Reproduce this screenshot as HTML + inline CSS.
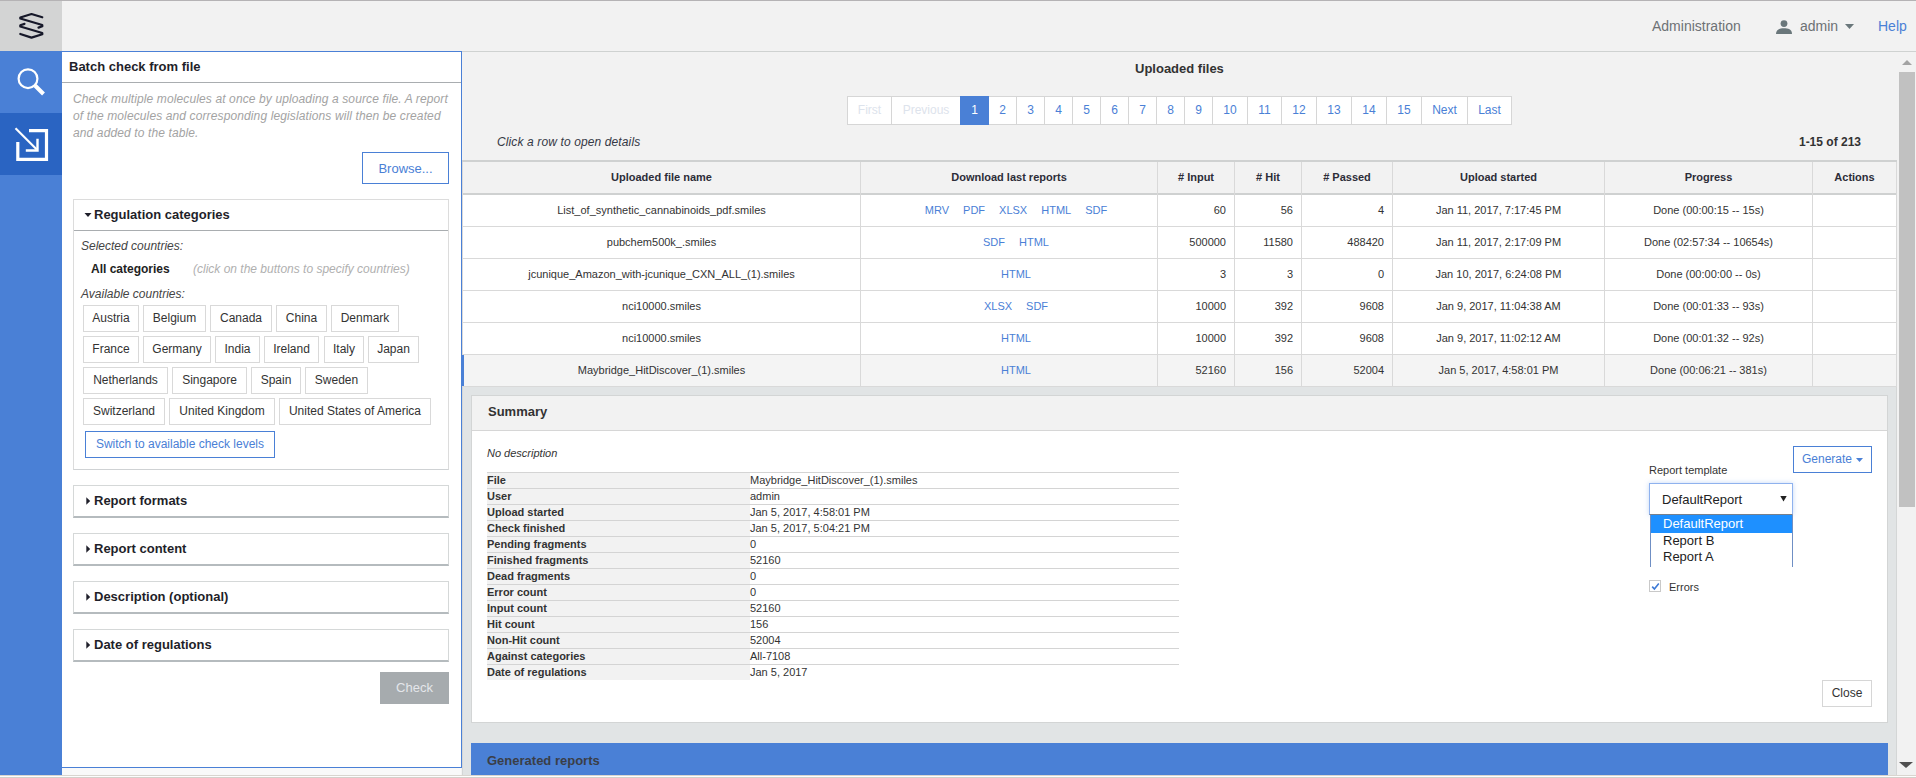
<!DOCTYPE html>
<html><head><meta charset="utf-8">
<style>
*{box-sizing:border-box;}
html,body{margin:0;padding:0;}
body{width:1916px;height:778px;overflow:hidden;position:relative;background:#f2f2f2;font-family:"Liberation Sans",sans-serif;font-size:12px;color:#333;}
.a{position:absolute;}
.t{position:absolute;white-space:nowrap;}
</style></head><body>
<!-- top chrome line -->
<div class="a" style="left:0;top:0;width:1916px;height:1px;background:#b5b3b5"></div>
<!-- logo -->
<div class="a" style="left:0;top:1px;width:62px;height:50px;background:#d3d4d4">
<svg width="62" height="50" style="position:absolute;left:0;top:-1px" viewBox="0 0 62 50"><path d="M42.3 17.3 L31.5 14 L20.3 17.5 L20.3 18.5 L42.3 25 L42.3 26.2 L38.5 27.6 M24.5 23.9 L20.3 25.2 L20.3 26.5 L42.3 33 L42.3 34.3 L31.5 37.6 L20.3 34" fill="none" stroke="#161829" stroke-width="2.2" stroke-linejoin="round" stroke-linecap="round"/></svg>
</div>
<!-- topbar -->
<div class="a" style="left:62px;top:1px;width:1854px;height:51px;background:#f2f2f2;border-bottom:1px solid #cfd2d1"></div>
<div class="t" style="left:1652px;top:17px;font-size:14px;line-height:18px;color:#6d7175">Administration</div>
<svg class="a" style="left:1775px;top:20px" width="18" height="14" viewBox="0 0 18 14"><circle cx="9" cy="3.6" r="3.4" fill="#6a777b"/><path d="M1 14 C1 9 5 8.2 9 8.2 C13 8.2 17 9 17 14 Z" fill="#6a777b"/></svg>
<div class="t" style="left:1800px;top:17px;font-size:14px;line-height:18px;color:#6d7175">admin</div>
<svg class="a" style="left:1845px;top:24px" width="9" height="5" viewBox="0 0 9 5"><path d="M0 0 L9 0 L4.5 5 Z" fill="#6a777b"/></svg>
<div class="t" style="left:1878px;top:17px;font-size:14px;line-height:18px;color:#4a80d6">Help</div>

<!-- sidebar -->
<div class="a" style="left:0;top:51px;width:62px;height:724px;background:#4a80d6"></div>
<div class="a" style="left:0;top:113px;width:62px;height:62px;background:#2a64c2"></div>
<svg class="a" style="left:0;top:51px" width="62" height="62" viewBox="0 0 62 62"><circle cx="28" cy="27.7" r="9.4" fill="none" stroke="#fff" stroke-width="2.2"/><path d="M35 34.5 L43.5 43" stroke="#fff" stroke-width="4" stroke-linecap="butt"/></svg>
<svg class="a" style="left:0;top:113px" width="62" height="62" viewBox="0 0 62 62"><path d="M17.8 29 V46.3 H46.5 V17.6 H29" fill="none" stroke="#fff" stroke-width="3.2"/><path d="M15.5 15.3 L36.5 36.3" stroke="#fff" stroke-width="2.2"/><path d="M37.5 25.7 V37.5 H25.8" fill="none" stroke="#fff" stroke-width="2.4"/></svg>

<!-- left panel -->
<div class="a" style="left:62px;top:51px;width:400px;height:717px;background:#fff;border-top:1px solid #4a80d6;border-right:1px solid #4a80d6;border-bottom:1px solid #4a80d6"></div>
<div class="a" style="left:62px;top:768px;width:399px;height:7px;background:#f9f9f9"></div>
<div class="a" style="left:0;top:775px;width:1916px;height:1px;background:#d9d5cf"></div>
<div class="a" style="left:0;top:776px;width:1916px;height:1px;background:#fdfdfd"></div>
<div class="a" style="left:0;top:777px;width:1916px;height:1px;background:#d4d0cb"></div>

<div class="t" style="left:69px;top:59px;font-size:13px;line-height:16px;font-weight:bold;color:#1f1f2a">Batch check from file</div>
<div class="a" style="left:62px;top:82px;width:399px;height:1px;background:#a9adb0"></div>
<div class="t" style="left:73px;top:91px;font-size:12px;line-height:17px;font-style:italic;color:#a3a3a3;letter-spacing:0.12px">Check multiple molecules at once by uploading a source file. A report<br>of the molecules and corresponding legislations will then be created<br>and added to the table.</div>
<div class="a" style="left:362px;top:152px;width:87px;height:32px;border:1px solid #4a80d6;background:#fff;color:#4a80d6;font-size:13px;line-height:31px;text-align:center">Browse...</div>

<!-- regulation categories -->
<div class="a" style="left:73px;top:199px;width:376px;height:271px;border:1px solid #dcdcdc;border-bottom-color:#cfd2d4"></div>
<div class="a" style="left:74px;top:230px;width:374px;height:1px;background:#a9adb0"></div>
<svg class="a" style="left:84px;top:213px" width="8" height="5" viewBox="0 0 8 5"><path d="M0.5 0 H7.5 L4 4 Z" fill="#1f1f2a"/></svg>
<div class="t" style="left:94px;top:207px;font-size:13px;line-height:16px;font-weight:bold;color:#1f1f2a">Regulation categories</div>
<div class="t" style="left:81px;top:239px;font-size:12px;line-height:15px;font-style:italic;color:#444">Selected countries:</div>
<div class="t" style="left:91px;top:262px;font-size:12px;line-height:15px;font-weight:bold;color:#222">All categories</div>
<div class="t" style="left:193px;top:262px;font-size:12px;line-height:15px;font-style:italic;color:#b0b0b0">(click on the buttons to specify countries)</div>
<div class="t" style="left:81px;top:287px;font-size:12px;line-height:15px;font-style:italic;color:#444">Available countries:</div>
<div class="a" style="left:83px;top:305px;width:56px;height:27px;border:1px solid #d9d9d9;background:#fff;font-size:12px;line-height:24px;text-align:center;color:#333">Austria</div>
<div class="a" style="left:143px;top:305px;width:63px;height:27px;border:1px solid #d9d9d9;background:#fff;font-size:12px;line-height:24px;text-align:center;color:#333">Belgium</div>
<div class="a" style="left:210px;top:305px;width:62px;height:27px;border:1px solid #d9d9d9;background:#fff;font-size:12px;line-height:24px;text-align:center;color:#333">Canada</div>
<div class="a" style="left:276px;top:305px;width:51px;height:27px;border:1px solid #d9d9d9;background:#fff;font-size:12px;line-height:24px;text-align:center;color:#333">China</div>
<div class="a" style="left:331px;top:305px;width:68px;height:27px;border:1px solid #d9d9d9;background:#fff;font-size:12px;line-height:24px;text-align:center;color:#333">Denmark</div>
<div class="a" style="left:83px;top:336px;width:56px;height:27px;border:1px solid #d9d9d9;background:#fff;font-size:12px;line-height:24px;text-align:center;color:#333">France</div>
<div class="a" style="left:143px;top:336px;width:68px;height:27px;border:1px solid #d9d9d9;background:#fff;font-size:12px;line-height:24px;text-align:center;color:#333">Germany</div>
<div class="a" style="left:215px;top:336px;width:45px;height:27px;border:1px solid #d9d9d9;background:#fff;font-size:12px;line-height:24px;text-align:center;color:#333">India</div>
<div class="a" style="left:264px;top:336px;width:55px;height:27px;border:1px solid #d9d9d9;background:#fff;font-size:12px;line-height:24px;text-align:center;color:#333">Ireland</div>
<div class="a" style="left:324px;top:336px;width:40px;height:27px;border:1px solid #d9d9d9;background:#fff;font-size:12px;line-height:24px;text-align:center;color:#333">Italy</div>
<div class="a" style="left:368px;top:336px;width:51px;height:27px;border:1px solid #d9d9d9;background:#fff;font-size:12px;line-height:24px;text-align:center;color:#333">Japan</div>
<div class="a" style="left:83px;top:367px;width:85px;height:27px;border:1px solid #d9d9d9;background:#fff;font-size:12px;line-height:24px;text-align:center;color:#333">Netherlands</div>
<div class="a" style="left:172px;top:367px;width:75px;height:27px;border:1px solid #d9d9d9;background:#fff;font-size:12px;line-height:24px;text-align:center;color:#333">Singapore</div>
<div class="a" style="left:251px;top:367px;width:50px;height:27px;border:1px solid #d9d9d9;background:#fff;font-size:12px;line-height:24px;text-align:center;color:#333">Spain</div>
<div class="a" style="left:305px;top:367px;width:63px;height:27px;border:1px solid #d9d9d9;background:#fff;font-size:12px;line-height:24px;text-align:center;color:#333">Sweden</div>
<div class="a" style="left:83px;top:398px;width:82px;height:27px;border:1px solid #d9d9d9;background:#fff;font-size:12px;line-height:24px;text-align:center;color:#333">Switzerland</div>
<div class="a" style="left:169px;top:398px;width:106px;height:27px;border:1px solid #d9d9d9;background:#fff;font-size:12px;line-height:24px;text-align:center;color:#333">United Kingdom</div>
<div class="a" style="left:279px;top:398px;width:152px;height:27px;border:1px solid #d9d9d9;background:#fff;font-size:12px;line-height:24px;text-align:center;color:#333">United States of America</div>
<div class="a" style="left:85px;top:431px;width:190px;height:27px;border:1px solid #4a80d6;background:#fff;font-size:12px;line-height:25px;text-align:center;color:#4a80d6">Switch to available check levels</div>
<div class="a" style="left:73px;top:485px;width:376px;height:33px;border:1px solid #d5d8d8;border-bottom:2px solid #b5bbbe;background:#fff"></div>
<svg class="a" style="left:86px;top:497px" width="5" height="8" viewBox="0 0 5 8"><path d="M0.3 0.3 V7.7 L4.2 4 Z" fill="#1f1f2a"/></svg>
<div class="t" style="left:94px;top:493px;font-size:13px;line-height:16px;font-weight:bold;color:#1f1f2a">Report formats</div>
<div class="a" style="left:73px;top:533px;width:376px;height:33px;border:1px solid #d5d8d8;border-bottom:2px solid #b5bbbe;background:#fff"></div>
<svg class="a" style="left:86px;top:545px" width="5" height="8" viewBox="0 0 5 8"><path d="M0.3 0.3 V7.7 L4.2 4 Z" fill="#1f1f2a"/></svg>
<div class="t" style="left:94px;top:541px;font-size:13px;line-height:16px;font-weight:bold;color:#1f1f2a">Report content</div>
<div class="a" style="left:73px;top:581px;width:376px;height:33px;border:1px solid #d5d8d8;border-bottom:2px solid #b5bbbe;background:#fff"></div>
<svg class="a" style="left:86px;top:593px" width="5" height="8" viewBox="0 0 5 8"><path d="M0.3 0.3 V7.7 L4.2 4 Z" fill="#1f1f2a"/></svg>
<div class="t" style="left:94px;top:589px;font-size:13px;line-height:16px;font-weight:bold;color:#1f1f2a">Description (optional)</div>
<div class="a" style="left:73px;top:629px;width:376px;height:33px;border:1px solid #d5d8d8;border-bottom:2px solid #b5bbbe;background:#fff"></div>
<svg class="a" style="left:86px;top:641px" width="5" height="8" viewBox="0 0 5 8"><path d="M0.3 0.3 V7.7 L4.2 4 Z" fill="#1f1f2a"/></svg>
<div class="t" style="left:94px;top:637px;font-size:13px;line-height:16px;font-weight:bold;color:#1f1f2a">Date of regulations</div>
<div class="a" style="left:380px;top:672px;width:69px;height:32px;background:#a6abae;color:#e4e6ea;font-size:13px;line-height:32px;text-align:center">Check</div>


<!-- main -->
<div class="t" style="left:1135px;top:61px;font-size:13px;line-height:16px;font-weight:bold;color:#333">Uploaded files</div>
<div class="a" style="left:847px;top:96px;width:45px;height:29px;background:#fff;border:1px solid #d6d6d6;color:#dde3ec;font-size:12px;line-height:27px;text-align:center">First</div>
<div class="a" style="left:891px;top:96px;width:70px;height:29px;background:#fff;border:1px solid #d6d6d6;color:#dde3ec;font-size:12px;line-height:27px;text-align:center">Previous</div>
<div class="a" style="left:960px;top:96px;width:29px;height:29px;z-index:2;background:#4a80d6;color:#fff;font-size:12px;line-height:29px;text-align:center">1</div>
<div class="a" style="left:988px;top:96px;width:29px;height:29px;background:#fff;border:1px solid #d6d6d6;color:#4a80d6;font-size:12px;line-height:27px;text-align:center">2</div>
<div class="a" style="left:1016px;top:96px;width:29px;height:29px;background:#fff;border:1px solid #d6d6d6;color:#4a80d6;font-size:12px;line-height:27px;text-align:center">3</div>
<div class="a" style="left:1044px;top:96px;width:29px;height:29px;background:#fff;border:1px solid #d6d6d6;color:#4a80d6;font-size:12px;line-height:27px;text-align:center">4</div>
<div class="a" style="left:1072px;top:96px;width:29px;height:29px;background:#fff;border:1px solid #d6d6d6;color:#4a80d6;font-size:12px;line-height:27px;text-align:center">5</div>
<div class="a" style="left:1100px;top:96px;width:29px;height:29px;background:#fff;border:1px solid #d6d6d6;color:#4a80d6;font-size:12px;line-height:27px;text-align:center">6</div>
<div class="a" style="left:1128px;top:96px;width:29px;height:29px;background:#fff;border:1px solid #d6d6d6;color:#4a80d6;font-size:12px;line-height:27px;text-align:center">7</div>
<div class="a" style="left:1156px;top:96px;width:29px;height:29px;background:#fff;border:1px solid #d6d6d6;color:#4a80d6;font-size:12px;line-height:27px;text-align:center">8</div>
<div class="a" style="left:1184px;top:96px;width:29px;height:29px;background:#fff;border:1px solid #d6d6d6;color:#4a80d6;font-size:12px;line-height:27px;text-align:center">9</div>
<div class="a" style="left:1212px;top:96px;width:36px;height:29px;background:#fff;border:1px solid #d6d6d6;color:#4a80d6;font-size:12px;line-height:27px;text-align:center">10</div>
<div class="a" style="left:1247px;top:96px;width:35px;height:29px;background:#fff;border:1px solid #d6d6d6;color:#4a80d6;font-size:12px;line-height:27px;text-align:center">11</div>
<div class="a" style="left:1281px;top:96px;width:36px;height:29px;background:#fff;border:1px solid #d6d6d6;color:#4a80d6;font-size:12px;line-height:27px;text-align:center">12</div>
<div class="a" style="left:1316px;top:96px;width:36px;height:29px;background:#fff;border:1px solid #d6d6d6;color:#4a80d6;font-size:12px;line-height:27px;text-align:center">13</div>
<div class="a" style="left:1351px;top:96px;width:36px;height:29px;background:#fff;border:1px solid #d6d6d6;color:#4a80d6;font-size:12px;line-height:27px;text-align:center">14</div>
<div class="a" style="left:1386px;top:96px;width:36px;height:29px;background:#fff;border:1px solid #d6d6d6;color:#4a80d6;font-size:12px;line-height:27px;text-align:center">15</div>
<div class="a" style="left:1421px;top:96px;width:47px;height:29px;background:#fff;border:1px solid #d6d6d6;color:#4a80d6;font-size:12px;line-height:27px;text-align:center">Next</div>
<div class="a" style="left:1467px;top:96px;width:45px;height:29px;background:#fff;border:1px solid #d6d6d6;color:#4a80d6;font-size:12px;line-height:27px;text-align:center">Last</div>
<div class="t" style="left:497px;top:135px;font-size:12px;line-height:15px;font-style:italic;color:#353845;letter-spacing:0.12px">Click a row to open details</div>
<div class="t" style="left:1761px;top:135px;width:100px;text-align:right;font-size:12px;line-height:15px;font-weight:bold;color:#333">1-15 of 213</div>
<div class="a" style="left:462px;top:160px;width:1435px;height:2px;background:#cfd1d1"></div>
<div class="a" style="left:462px;top:193px;width:1435px;height:2px;background:#cfd1d1"></div>
<div class="a" style="left:462px;top:195px;width:1435px;height:192px;background:#fff"></div>
<div class="a" style="left:462px;top:355px;width:1435px;height:31px;background:#f4f4f4"></div>
<div class="a" style="left:462px;top:226px;width:1435px;height:1px;background:#d9d9d9"></div>
<div class="a" style="left:462px;top:258px;width:1435px;height:1px;background:#d9d9d9"></div>
<div class="a" style="left:462px;top:290px;width:1435px;height:1px;background:#d9d9d9"></div>
<div class="a" style="left:462px;top:322px;width:1435px;height:1px;background:#d9d9d9"></div>
<div class="a" style="left:462px;top:354px;width:1435px;height:1px;background:#d9d9d9"></div>
<div class="a" style="left:462px;top:386px;width:1435px;height:1px;background:#d9d9d9"></div>
<div class="a" style="left:462px;top:162px;width:1px;height:225px;background:#d9d9d9"></div>
<div class="a" style="left:860px;top:162px;width:1px;height:225px;background:#d9d9d9"></div>
<div class="a" style="left:1157px;top:162px;width:1px;height:225px;background:#d9d9d9"></div>
<div class="a" style="left:1234px;top:162px;width:1px;height:225px;background:#d9d9d9"></div>
<div class="a" style="left:1301px;top:162px;width:1px;height:225px;background:#d9d9d9"></div>
<div class="a" style="left:1392px;top:162px;width:1px;height:225px;background:#d9d9d9"></div>
<div class="a" style="left:1604px;top:162px;width:1px;height:225px;background:#d9d9d9"></div>
<div class="a" style="left:1812px;top:162px;width:1px;height:225px;background:#d9d9d9"></div>
<div class="a" style="left:1896px;top:162px;width:1px;height:225px;background:#d9d9d9"></div>
<div class="a" style="left:461px;top:355px;width:3px;height:31px;background:#4a80d6"></div>
<div class="t" style="left:463px;top:170px;width:397px;text-align:center;font-size:11px;line-height:14px;font-weight:bold;color:#2d2d38">Uploaded file name</div>
<div class="t" style="left:861px;top:170px;width:296px;text-align:center;font-size:11px;line-height:14px;font-weight:bold;color:#2d2d38">Download last reports</div>
<div class="t" style="left:1158px;top:170px;width:76px;text-align:center;font-size:11px;line-height:14px;font-weight:bold;color:#2d2d38"># Input</div>
<div class="t" style="left:1235px;top:170px;width:66px;text-align:center;font-size:11px;line-height:14px;font-weight:bold;color:#2d2d38"># Hit</div>
<div class="t" style="left:1302px;top:170px;width:90px;text-align:center;font-size:11px;line-height:14px;font-weight:bold;color:#2d2d38"># Passed</div>
<div class="t" style="left:1393px;top:170px;width:211px;text-align:center;font-size:11px;line-height:14px;font-weight:bold;color:#2d2d38">Upload started</div>
<div class="t" style="left:1605px;top:170px;width:207px;text-align:center;font-size:11px;line-height:14px;font-weight:bold;color:#2d2d38">Progress</div>
<div class="t" style="left:1813px;top:170px;width:83px;text-align:center;font-size:11px;line-height:14px;font-weight:bold;color:#2d2d38">Actions</div>
<div class="t" style="left:463px;top:203px;width:397px;text-align:center;font-size:11px;line-height:14px;color:#333">List_of_synthetic_cannabinoids_pdf.smiles</div>
<div class="t" style="left:861px;top:203px;width:296px;text-align:center;font-size:11px;line-height:14px;color:#4a80d6"><span style="margin-left:14px">MRV</span><span style="margin-left:14px">PDF</span><span style="margin-left:14px">XLSX</span><span style="margin-left:14px">HTML</span><span style="margin-left:14px">SDF</span></div>
<div class="t" style="left:1158px;top:203px;width:76px;text-align:right;font-size:11px;line-height:14px;color:#333;padding-right:8px">60</div>
<div class="t" style="left:1235px;top:203px;width:66px;text-align:right;font-size:11px;line-height:14px;color:#333;padding-right:8px">56</div>
<div class="t" style="left:1302px;top:203px;width:90px;text-align:right;font-size:11px;line-height:14px;color:#333;padding-right:8px">4</div>
<div class="t" style="left:1393px;top:203px;width:211px;text-align:center;font-size:11px;line-height:14px;color:#333">Jan 11, 2017, 7:17:45 PM</div>
<div class="t" style="left:1605px;top:203px;width:207px;text-align:center;font-size:11px;line-height:14px;color:#333">Done (00:00:15 -- 15s)</div>
<div class="t" style="left:463px;top:235px;width:397px;text-align:center;font-size:11px;line-height:14px;color:#333">pubchem500k_.smiles</div>
<div class="t" style="left:861px;top:235px;width:296px;text-align:center;font-size:11px;line-height:14px;color:#4a80d6"><span style="margin-left:14px">SDF</span><span style="margin-left:14px">HTML</span></div>
<div class="t" style="left:1158px;top:235px;width:76px;text-align:right;font-size:11px;line-height:14px;color:#333;padding-right:8px">500000</div>
<div class="t" style="left:1235px;top:235px;width:66px;text-align:right;font-size:11px;line-height:14px;color:#333;padding-right:8px">11580</div>
<div class="t" style="left:1302px;top:235px;width:90px;text-align:right;font-size:11px;line-height:14px;color:#333;padding-right:8px">488420</div>
<div class="t" style="left:1393px;top:235px;width:211px;text-align:center;font-size:11px;line-height:14px;color:#333">Jan 11, 2017, 2:17:09 PM</div>
<div class="t" style="left:1605px;top:235px;width:207px;text-align:center;font-size:11px;line-height:14px;color:#333">Done (02:57:34 -- 10654s)</div>
<div class="t" style="left:463px;top:267px;width:397px;text-align:center;font-size:11px;line-height:14px;color:#333">jcunique_Amazon_with-jcunique_CXN_ALL_(1).smiles</div>
<div class="t" style="left:861px;top:267px;width:296px;text-align:center;font-size:11px;line-height:14px;color:#4a80d6"><span style="margin-left:14px">HTML</span></div>
<div class="t" style="left:1158px;top:267px;width:76px;text-align:right;font-size:11px;line-height:14px;color:#333;padding-right:8px">3</div>
<div class="t" style="left:1235px;top:267px;width:66px;text-align:right;font-size:11px;line-height:14px;color:#333;padding-right:8px">3</div>
<div class="t" style="left:1302px;top:267px;width:90px;text-align:right;font-size:11px;line-height:14px;color:#333;padding-right:8px">0</div>
<div class="t" style="left:1393px;top:267px;width:211px;text-align:center;font-size:11px;line-height:14px;color:#333">Jan 10, 2017, 6:24:08 PM</div>
<div class="t" style="left:1605px;top:267px;width:207px;text-align:center;font-size:11px;line-height:14px;color:#333">Done (00:00:00 -- 0s)</div>
<div class="t" style="left:463px;top:299px;width:397px;text-align:center;font-size:11px;line-height:14px;color:#333">nci10000.smiles</div>
<div class="t" style="left:861px;top:299px;width:296px;text-align:center;font-size:11px;line-height:14px;color:#4a80d6"><span style="margin-left:14px">XLSX</span><span style="margin-left:14px">SDF</span></div>
<div class="t" style="left:1158px;top:299px;width:76px;text-align:right;font-size:11px;line-height:14px;color:#333;padding-right:8px">10000</div>
<div class="t" style="left:1235px;top:299px;width:66px;text-align:right;font-size:11px;line-height:14px;color:#333;padding-right:8px">392</div>
<div class="t" style="left:1302px;top:299px;width:90px;text-align:right;font-size:11px;line-height:14px;color:#333;padding-right:8px">9608</div>
<div class="t" style="left:1393px;top:299px;width:211px;text-align:center;font-size:11px;line-height:14px;color:#333">Jan 9, 2017, 11:04:38 AM</div>
<div class="t" style="left:1605px;top:299px;width:207px;text-align:center;font-size:11px;line-height:14px;color:#333">Done (00:01:33 -- 93s)</div>
<div class="t" style="left:463px;top:331px;width:397px;text-align:center;font-size:11px;line-height:14px;color:#333">nci10000.smiles</div>
<div class="t" style="left:861px;top:331px;width:296px;text-align:center;font-size:11px;line-height:14px;color:#4a80d6"><span style="margin-left:14px">HTML</span></div>
<div class="t" style="left:1158px;top:331px;width:76px;text-align:right;font-size:11px;line-height:14px;color:#333;padding-right:8px">10000</div>
<div class="t" style="left:1235px;top:331px;width:66px;text-align:right;font-size:11px;line-height:14px;color:#333;padding-right:8px">392</div>
<div class="t" style="left:1302px;top:331px;width:90px;text-align:right;font-size:11px;line-height:14px;color:#333;padding-right:8px">9608</div>
<div class="t" style="left:1393px;top:331px;width:211px;text-align:center;font-size:11px;line-height:14px;color:#333">Jan 9, 2017, 11:02:12 AM</div>
<div class="t" style="left:1605px;top:331px;width:207px;text-align:center;font-size:11px;line-height:14px;color:#333">Done (00:01:32 -- 92s)</div>
<div class="t" style="left:463px;top:363px;width:397px;text-align:center;font-size:11px;line-height:14px;color:#333">Maybridge_HitDiscover_(1).smiles</div>
<div class="t" style="left:861px;top:363px;width:296px;text-align:center;font-size:11px;line-height:14px;color:#4a80d6"><span style="margin-left:14px">HTML</span></div>
<div class="t" style="left:1158px;top:363px;width:76px;text-align:right;font-size:11px;line-height:14px;color:#333;padding-right:8px">52160</div>
<div class="t" style="left:1235px;top:363px;width:66px;text-align:right;font-size:11px;line-height:14px;color:#333;padding-right:8px">156</div>
<div class="t" style="left:1302px;top:363px;width:90px;text-align:right;font-size:11px;line-height:14px;color:#333;padding-right:8px">52004</div>
<div class="t" style="left:1393px;top:363px;width:211px;text-align:center;font-size:11px;line-height:14px;color:#333">Jan 5, 2017, 4:58:01 PM</div>
<div class="t" style="left:1605px;top:363px;width:207px;text-align:center;font-size:11px;line-height:14px;color:#333">Done (00:06:21 -- 381s)</div>
<div class="a" style="left:462px;top:387px;width:1435px;height:388px;background:#e1e4e5"></div>
<div class="a" style="left:1896px;top:387px;width:1px;height:388px;background:#d4d6d6"></div>
<div class="a" style="left:462px;top:387px;width:1px;height:388px;background:#d4d6d6"></div>
<div class="a" style="left:471px;top:395px;width:1417px;height:328px;background:#fff;border:1px solid #d3d5d5"></div>
<div class="a" style="left:472px;top:396px;width:1415px;height:35px;background:#f2f2f2;border-bottom:1px solid #d6d6d6"></div>
<div class="t" style="left:488px;top:404px;font-size:13px;line-height:16px;font-weight:bold;color:#333">Summary</div>
<div class="t" style="left:487px;top:446px;font-size:11px;line-height:14px;font-style:italic;color:#333">No description</div>
<div class="a" style="left:487px;top:472px;width:263px;height:208px;background:#f2f2f2"></div>
<div class="a" style="left:487px;top:472px;width:692px;height:1px;background:#d4d4d4"></div>
<div class="t" style="left:487px;top:473px;font-size:11px;line-height:15px;font-weight:bold;color:#333">File</div>
<div class="t" style="left:750px;top:473px;font-size:11px;line-height:15px;color:#333">Maybridge_HitDiscover_(1).smiles</div>
<div class="a" style="left:487px;top:488px;width:692px;height:1px;background:#d4d4d4"></div>
<div class="t" style="left:487px;top:489px;font-size:11px;line-height:15px;font-weight:bold;color:#333">User</div>
<div class="t" style="left:750px;top:489px;font-size:11px;line-height:15px;color:#333">admin</div>
<div class="a" style="left:487px;top:504px;width:692px;height:1px;background:#d4d4d4"></div>
<div class="t" style="left:487px;top:505px;font-size:11px;line-height:15px;font-weight:bold;color:#333">Upload started</div>
<div class="t" style="left:750px;top:505px;font-size:11px;line-height:15px;color:#333">Jan 5, 2017, 4:58:01 PM</div>
<div class="a" style="left:487px;top:520px;width:692px;height:1px;background:#d4d4d4"></div>
<div class="t" style="left:487px;top:521px;font-size:11px;line-height:15px;font-weight:bold;color:#333">Check finished</div>
<div class="t" style="left:750px;top:521px;font-size:11px;line-height:15px;color:#333">Jan 5, 2017, 5:04:21 PM</div>
<div class="a" style="left:487px;top:536px;width:692px;height:1px;background:#d4d4d4"></div>
<div class="t" style="left:487px;top:537px;font-size:11px;line-height:15px;font-weight:bold;color:#333">Pending fragments</div>
<div class="t" style="left:750px;top:537px;font-size:11px;line-height:15px;color:#333">0</div>
<div class="a" style="left:487px;top:552px;width:692px;height:1px;background:#d4d4d4"></div>
<div class="t" style="left:487px;top:553px;font-size:11px;line-height:15px;font-weight:bold;color:#333">Finished fragments</div>
<div class="t" style="left:750px;top:553px;font-size:11px;line-height:15px;color:#333">52160</div>
<div class="a" style="left:487px;top:568px;width:692px;height:1px;background:#d4d4d4"></div>
<div class="t" style="left:487px;top:569px;font-size:11px;line-height:15px;font-weight:bold;color:#333">Dead fragments</div>
<div class="t" style="left:750px;top:569px;font-size:11px;line-height:15px;color:#333">0</div>
<div class="a" style="left:487px;top:584px;width:692px;height:1px;background:#d4d4d4"></div>
<div class="t" style="left:487px;top:585px;font-size:11px;line-height:15px;font-weight:bold;color:#333">Error count</div>
<div class="t" style="left:750px;top:585px;font-size:11px;line-height:15px;color:#333">0</div>
<div class="a" style="left:487px;top:600px;width:692px;height:1px;background:#d4d4d4"></div>
<div class="t" style="left:487px;top:601px;font-size:11px;line-height:15px;font-weight:bold;color:#333">Input count</div>
<div class="t" style="left:750px;top:601px;font-size:11px;line-height:15px;color:#333">52160</div>
<div class="a" style="left:487px;top:616px;width:692px;height:1px;background:#d4d4d4"></div>
<div class="t" style="left:487px;top:617px;font-size:11px;line-height:15px;font-weight:bold;color:#333">Hit count</div>
<div class="t" style="left:750px;top:617px;font-size:11px;line-height:15px;color:#333">156</div>
<div class="a" style="left:487px;top:632px;width:692px;height:1px;background:#d4d4d4"></div>
<div class="t" style="left:487px;top:633px;font-size:11px;line-height:15px;font-weight:bold;color:#333">Non-Hit count</div>
<div class="t" style="left:750px;top:633px;font-size:11px;line-height:15px;color:#333">52004</div>
<div class="a" style="left:487px;top:648px;width:692px;height:1px;background:#d4d4d4"></div>
<div class="t" style="left:487px;top:649px;font-size:11px;line-height:15px;font-weight:bold;color:#333">Against categories</div>
<div class="t" style="left:750px;top:649px;font-size:11px;line-height:15px;color:#333">All-7108</div>
<div class="a" style="left:487px;top:664px;width:692px;height:1px;background:#d4d4d4"></div>
<div class="t" style="left:487px;top:665px;font-size:11px;line-height:15px;font-weight:bold;color:#333">Date of regulations</div>
<div class="t" style="left:750px;top:665px;font-size:11px;line-height:15px;color:#333">Jan 5, 2017</div>
<div class="t" style="left:1649px;top:463px;font-size:11px;line-height:14px;color:#333">Report template</div>
<div class="a" style="left:1793px;top:446px;width:79px;height:27px;border:1px solid #4a80d6;background:#fff;color:#4a80d6;font-size:12px;line-height:25px;padding-left:8px">Generate<svg style="position:absolute;left:62px;top:11px" width="7" height="4" viewBox="0 0 7 4"><path d="M0 0 H7 L3.5 4 Z" fill="#4a80d6"/></svg></div>
<div class="a" style="left:1649px;top:483px;width:144px;height:32px;border:1px solid #8fb2ee;border-bottom-color:#77808c;box-shadow:0 0 5px rgba(90,140,230,0.35);background:#fff;color:#222;font-size:13px;line-height:31px;padding-left:12px">DefaultReport<svg style="position:absolute;left:130px;top:12px" width="7" height="6" viewBox="0 0 7 6"><path d="M0.3 0 H6.7 L3.5 5.5 Z" fill="#222"/></svg></div>
<div class="a" style="left:1650px;top:515px;width:143px;height:52px;background:#fff;border-left:1px solid #6f8fc4;border-right:1px solid #6f8fc4"></div>
<div class="a" style="left:1651px;top:515px;width:141px;height:18px;background:#1e90ff"></div>
<div class="t" style="left:1663px;top:516px;font-size:13px;line-height:16px;color:#fff">DefaultReport</div>
<div class="t" style="left:1663px;top:533px;font-size:13px;line-height:16px;color:#222">Report B</div>
<div class="t" style="left:1663px;top:549px;font-size:13px;line-height:16px;color:#222">Report A</div>
<div class="a" style="left:1649px;top:580px;width:12px;height:12px;border:1px solid #c9c9c9;background:#fff"><svg style="position:absolute;left:1px;top:1px" width="9" height="9" viewBox="0 0 9 9"><path d="M1.2 4.6 L3.4 7 L7.8 1.5" fill="none" stroke="#3d7ad6" stroke-width="1.6"/></svg></div>
<div class="t" style="left:1669px;top:580px;font-size:11px;line-height:14px;color:#333">Errors</div>
<div class="a" style="left:1822px;top:680px;width:50px;height:27px;border:1px solid #d6d6d6;background:#fff;color:#333;font-size:12px;line-height:25px;text-align:center">Close</div>
<div class="a" style="left:471px;top:743px;width:1417px;height:32px;background:#4a80d6"></div>
<div class="t" style="left:487px;top:753px;font-size:13px;line-height:16px;font-weight:bold;color:#3a3e47">Generated reports</div>
<div class="a" style="left:1897px;top:52px;width:19px;height:723px;background:#f2f2f2"></div>
<svg class="a" style="left:1901px;top:59px" width="12" height="7" viewBox="0 0 12 7"><path d="M1 6 H11 L6 1 Z" fill="#a3a3a3"/></svg>
<div class="a" style="left:1899px;top:72px;width:16px;height:435px;background:#c1c1c1"></div>
<svg class="a" style="left:1898px;top:761px" width="16" height="8" viewBox="0 0 16 8"><path d="M1 1 H15 L8 7 Z" fill="#505050"/></svg>


</body></html>
